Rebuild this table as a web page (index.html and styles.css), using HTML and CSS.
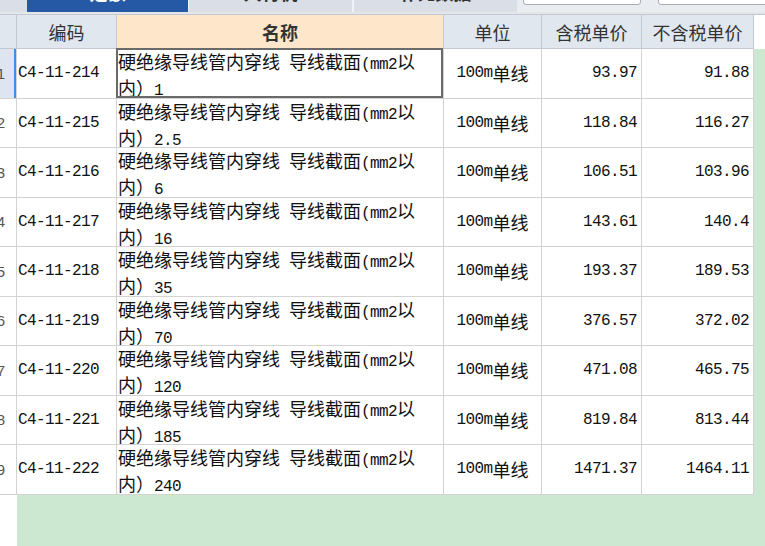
FILE: index.html
```html
<!DOCTYPE html>
<html lang="zh-CN">
<head>
<meta charset="utf-8">
<title>定额单价</title>
<link rel="stylesheet" href="styles.css">
</head>
<body>
<div class="tabs">
  <div class="lead"></div>
  <div class="tab active"><span class="lbl">定额</span></div>
  <div class="tab t2"><span class="lbl">人材机</span></div>
  <div class="tab t3"><span class="lbl">补充数据</span></div>
  <div class="tools">
    <div class="box b1"></div>
    <div class="box b2"></div>
  </div>
</div>
<div class="under"></div>
<div class="sheet">
  <div class="h num"></div>
  <div class="h">编码</div>
  <div class="h name">名称</div>
  <div class="h">单位</div>
  <div class="h">含税单价</div>
  <div class="h">不含税单价</div>
  <div class="hfill"></div>

  <div class="c num sel">1</div>
  <div class="c code">C4-11-214</div>
  <div class="c nm selcell">硬绝缘导线管内穿线<span class="a"> </span>导线截面<span class="a">(mm2</span>以<br>内）<span class="a">1</span></div>
  <div class="c unit"><span class="a">100m</span>单线</div>
  <div class="c pr">93.97</div>
  <div class="c pr">91.88</div>
  <div class="fill"></div>

  <div class="c num">2</div>
  <div class="c code">C4-11-215</div>
  <div class="c nm">硬绝缘导线管内穿线<span class="a"> </span>导线截面<span class="a">(mm2</span>以<br>内）<span class="a">2.5</span></div>
  <div class="c unit"><span class="a">100m</span>单线</div>
  <div class="c pr">118.84</div>
  <div class="c pr">116.27</div>
  <div class="fill"></div>

  <div class="c num">3</div>
  <div class="c code">C4-11-216</div>
  <div class="c nm">硬绝缘导线管内穿线<span class="a"> </span>导线截面<span class="a">(mm2</span>以<br>内）<span class="a">6</span></div>
  <div class="c unit"><span class="a">100m</span>单线</div>
  <div class="c pr">106.51</div>
  <div class="c pr">103.96</div>
  <div class="fill"></div>

  <div class="c num">4</div>
  <div class="c code">C4-11-217</div>
  <div class="c nm">硬绝缘导线管内穿线<span class="a"> </span>导线截面<span class="a">(mm2</span>以<br>内）<span class="a">16</span></div>
  <div class="c unit"><span class="a">100m</span>单线</div>
  <div class="c pr">143.61</div>
  <div class="c pr">140.4</div>
  <div class="fill"></div>

  <div class="c num">5</div>
  <div class="c code">C4-11-218</div>
  <div class="c nm">硬绝缘导线管内穿线<span class="a"> </span>导线截面<span class="a">(mm2</span>以<br>内）<span class="a">35</span></div>
  <div class="c unit"><span class="a">100m</span>单线</div>
  <div class="c pr">193.37</div>
  <div class="c pr">189.53</div>
  <div class="fill"></div>

  <div class="c num">6</div>
  <div class="c code">C4-11-219</div>
  <div class="c nm">硬绝缘导线管内穿线<span class="a"> </span>导线截面<span class="a">(mm2</span>以<br>内）<span class="a">70</span></div>
  <div class="c unit"><span class="a">100m</span>单线</div>
  <div class="c pr">376.57</div>
  <div class="c pr">372.02</div>
  <div class="fill"></div>

  <div class="c num">7</div>
  <div class="c code">C4-11-220</div>
  <div class="c nm">硬绝缘导线管内穿线<span class="a"> </span>导线截面<span class="a">(mm2</span>以<br>内）<span class="a">120</span></div>
  <div class="c unit"><span class="a">100m</span>单线</div>
  <div class="c pr">471.08</div>
  <div class="c pr">465.75</div>
  <div class="fill"></div>

  <div class="c num">8</div>
  <div class="c code">C4-11-221</div>
  <div class="c nm">硬绝缘导线管内穿线<span class="a"> </span>导线截面<span class="a">(mm2</span>以<br>内）<span class="a">185</span></div>
  <div class="c unit"><span class="a">100m</span>单线</div>
  <div class="c pr">819.84</div>
  <div class="c pr">813.44</div>
  <div class="fill"></div>

  <div class="c num">9</div>
  <div class="c code">C4-11-222</div>
  <div class="c nm">硬绝缘导线管内穿线<span class="a"> </span>导线截面<span class="a">(mm2</span>以<br>内）<span class="a">240</span></div>
  <div class="c unit"><span class="a">100m</span>单线</div>
  <div class="c pr">1471.37</div>
  <div class="c pr">1464.11</div>
  <div class="fill"></div>

  <div class="blank"></div>
</div>
</body>
</html>
```
FILE: styles.css
```css
* { box-sizing: border-box; margin: 0; padding: 0; }
html, body { width: 765px; height: 546px; overflow: hidden; }
body {
  background: #fff;
  font-family: "Noto Sans CJK SC", sans-serif;
  color: #111;
  display: flex;
  flex-direction: column;
}
.tabs {
  flex: none;
  height: 12px;
  display: flex;
  background: #e9ecf0;
  overflow: hidden;
}
.lead { width: 27px; background: #d9dee7; }
.tab {
  height: 12px;
  display: flex;
  justify-content: center;
  background: #d9dee7;
  overflow: hidden;
}
.tab.active { width: 162px; background: #2559a6; color: #fff; border-right: 1px solid #eef1f5; }
.tab.t2 { width: 165px; border-right: 2px solid #eef1f5; color: #333; }
.tab.t3 { width: 163px; color: #333; }
.lbl {
  font-size: 18px;
  line-height: 18px;
  margin-top: -17px;
  font-weight: bold;
}
.tools { flex: 1; display: flex; padding-left: 6px; gap: 17px; }
.box {
  height: 6px;
  margin-top: -1px;
  background: #fff;
  border: 1px solid #a9adb3;
  border-radius: 0 0 3px 3px;
}
.b1 { width: 118px; }
.b2 { flex: 1; margin-right: -10px; }
.under { flex: none; height: 2px; background: #e4e6ea; }

.sheet {
  flex: 1;
  margin-left: -14px;
  width: 779px;
  background: #cde8d0;
  display: grid;
  grid-template-columns: 31px 100px 327px 98px 100px 112px 1fr;
  grid-template-rows: 35px repeat(9, 49.5px) 1fr;
}
.h {
  background: #e1e7ef;
  border-top: 1px solid #c3c8d0;
  border-right: 1px solid #c3c8d0;
  border-bottom: 1px solid #c3c8d0;
  display: flex;
  align-items: center;
  justify-content: center;
  font-size: 18px;
  color: #333;
}
.h.name { background: #fde6c9; font-weight: bold; }
.hfill { background: #fff; border-top: 1px solid #c3c8d0; }

.c {
  background: #fff;
  border-right: 1px solid #d3d3d3;
  border-bottom: 1px solid #d3d3d3;
  display: flex;
  align-items: center;
  font-size: 18px;
  color: #111;
  overflow: hidden;
}
.num {
  justify-content: center;
  padding-left: 0;
  font-family: "Liberation Sans", sans-serif;
  font-size: 15px;
  color: #555;
}
.num.sel { background: #dde5f0; box-shadow: inset -2px 0 0 #3f8ee6; }
.a {
  font-family: "Liberation Mono", monospace;
  font-size: 16px;
  letter-spacing: -0.6px;
}
.code {
  padding-left: 1px;
  font-family: "Liberation Mono", monospace;
  font-size: 16px;
  letter-spacing: -0.6px;
}
.nm {
  display: block;
  padding: 1px 0 0 1px;
  line-height: 22px;
}
.selcell { position: relative; overflow: visible; }
.selcell::after {
  content: "";
  position: absolute;
  top: -1px;
  left: -1px;
  right: 0;
  bottom: 0;
  border: 2px solid #6a6a6a;
}
.unit { justify-content: center; }
.pr {
  justify-content: flex-end;
  padding-right: 4px;
  font-family: "Liberation Mono", monospace;
  font-size: 16px;
  letter-spacing: -0.6px;
}
.fill { background: transparent; }
.blank { background: #fff; }
```
